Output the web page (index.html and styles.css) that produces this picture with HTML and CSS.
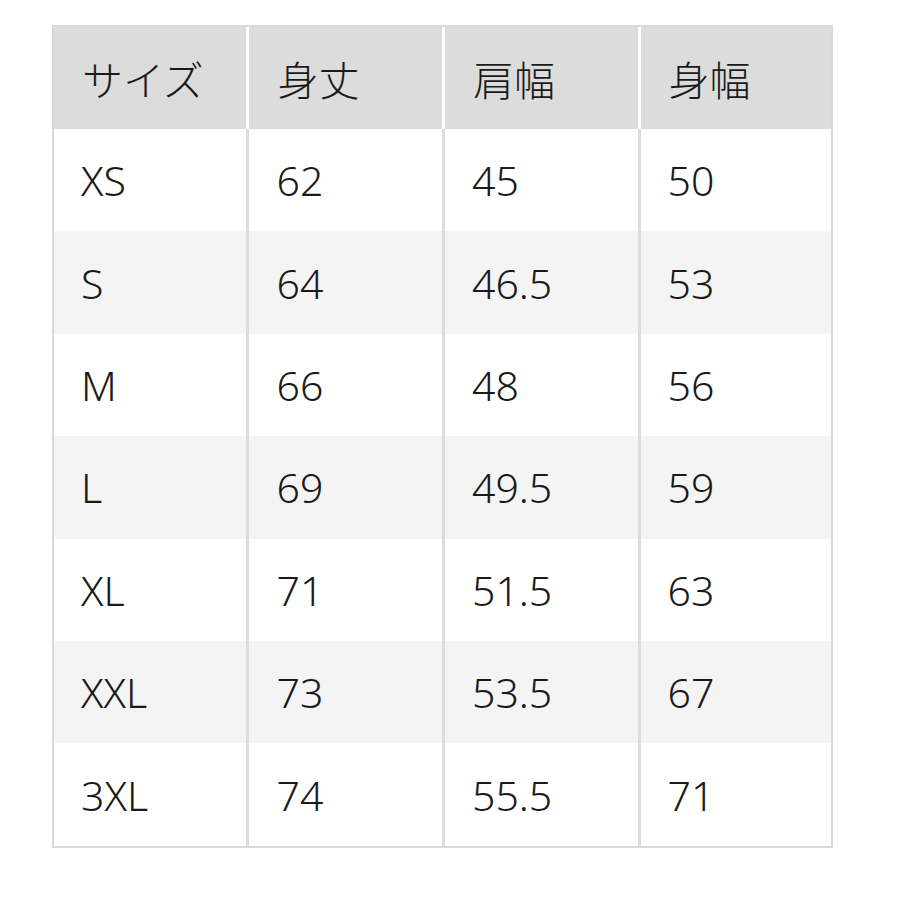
FILE: index.html
```html
<!DOCTYPE html>
<html lang="ja">
<head>
<meta charset="utf-8">
<link rel="stylesheet" href="styles.css">
</head>
<body>
<div class="size-table">
  <div class="row head">
    <div class="cell">サイズ</div><div class="cell">身丈</div><div class="cell">肩幅</div><div class="cell">身幅</div>
  </div>
  <div class="row"><div class="cell">XS</div><div class="cell">62</div><div class="cell">45</div><div class="cell">50</div></div>
  <div class="row alt"><div class="cell">S</div><div class="cell">64</div><div class="cell">46.5</div><div class="cell">53</div></div>
  <div class="row"><div class="cell">M</div><div class="cell">66</div><div class="cell">48</div><div class="cell">56</div></div>
  <div class="row alt"><div class="cell">L</div><div class="cell">69</div><div class="cell">49.5</div><div class="cell">59</div></div>
  <div class="row"><div class="cell">XL</div><div class="cell">71</div><div class="cell">51.5</div><div class="cell">63</div></div>
  <div class="row alt"><div class="cell">XXL</div><div class="cell">73</div><div class="cell">53.5</div><div class="cell">67</div></div>
  <div class="row"><div class="cell">3XL</div><div class="cell">74</div><div class="cell">55.5</div><div class="cell">71</div></div>
</div>
</body>
</html>
```

FILE: styles.css
```css
html, body {
  margin: 0;
  padding: 0;
  background: #ffffff;
}
body {
  font-family: "Noto Sans", "Noto Sans CJK JP", sans-serif;
  color: #1a1a1a;
}
.size-table {
  margin: 25px 0 0 52px;
  width: 781px;
  border: 2px solid #d9d9d9;
  box-sizing: border-box;
}
.row {
  display: grid;
  grid-template-columns: 192fr 195fr 195fr 193fr;
  height: 102.4px;
  background: #ffffff;
}
.row.alt {
  background: #f4f4f4;
}
.row .cell {
  display: flex;
  align-items: center;
  padding-left: 27px;
  font-size: 41px;
  font-weight: 300;
  border-left: 3px solid #dcdcdc;
}
.row .cell:first-child {
  border-left: none;
}
.row.head {
  height: 102px;
}
.row.head .cell {
  background: #dcdcdc;
  border-left: 3px solid #ffffff;
  font-family: "Noto Sans CJK JP", sans-serif;
  font-weight: 300;
  font-size: 41px;
  padding-left: 28px;
}
.row.head .cell:first-child {
  border-left: none;
}
```
